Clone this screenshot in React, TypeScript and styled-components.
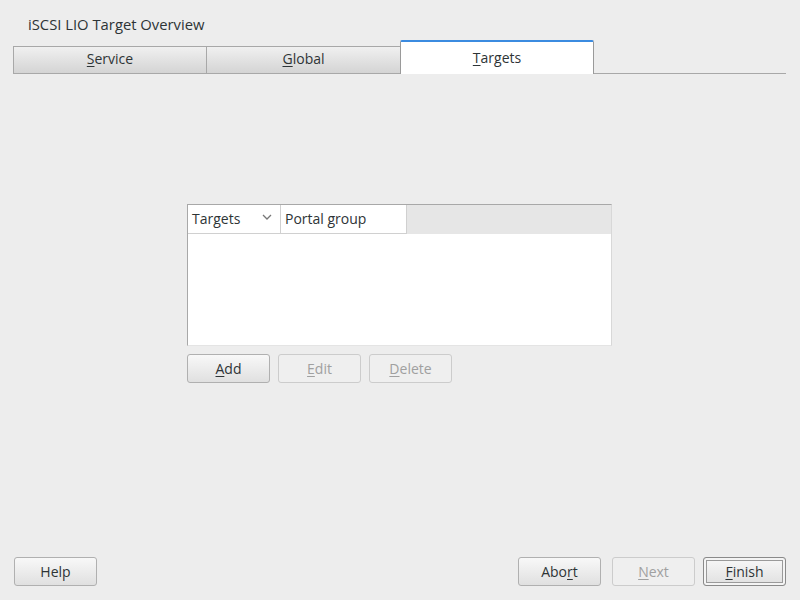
import React from "react";
import styled, { createGlobalStyle, css } from "styled-components";

const GlobalStyle = createGlobalStyle`
  html, body {
    margin: 0;
    padding: 0;
    background: #ededed;
  }
  body {
    font-family: "Open Sans", "DejaVu Sans", sans-serif;
    font-size: 14px;
    color: #2e3436;
  }
`;

const Window = styled.div`
  width: 800px;
  height: 600px;
  display: flex;
  flex-direction: column;
  box-sizing: border-box;
  overflow: hidden;
`;

const Title = styled.div`
  padding: 14px 0 0 28px;
  height: 26px;
  line-height: 20px;
  font-size: 14.8px;
`;

const TabBar = styled.div`
  display: flex;
  align-items: flex-end;
  margin: 0 14px 0 13px;
  height: 34px;
`;

const Tab = styled.div<{ $active?: boolean }>`
  width: 194px;
  height: 28px;
  box-sizing: border-box;
  display: flex;
  align-items: center;
  justify-content: center;
  border: 1px solid #a8a8a8;
  border-right: none;
  background: linear-gradient(#f0f0f0, #d4d4d4);
  line-height: 18px;
  padding-bottom: 2px;
  &:first-child {
    width: 193px;
  }
  ${(p) =>
    p.$active &&
    css`
      height: 34px;
      background: #ffffff;
      border: 1px solid #9a9a9a;
      border-top: 2px solid #3b8be0;
      border-bottom: none;
      border-radius: 2px 2px 0 0;
      padding-bottom: 0;
    `}
`;

const TabRest = styled.div`
  flex: 1;
  height: 1px;
  background: #a8a8a8;
`;

const Key = styled.span`
  text-decoration: underline;
  text-underline-offset: 2px;
`;

const Content = styled.div`
  flex: 1;
  display: flex;
  flex-direction: column;
  align-items: flex-start;
  padding: 130px 0 0 187px;
`;

const Panel = styled.div`
  width: 425px;
  display: flex;
  flex-direction: column;
  gap: 8px;
`;

const Table = styled.div`
  height: 142px;
  box-sizing: border-box;
  border: 1px solid #a8a8a8;
  border-right-color: #d8d8d8;
  border-bottom-color: #e4e4e4;
  background: #ffffff;
  display: flex;
  flex-direction: column;
`;

const HeaderRow = styled.div`
  display: flex;
  height: 29px;
  background: #e6e6e6;
  border-bottom: 1px solid #ffffff;
`;

const HeaderCell = styled.div<{ $w: number }>`
  width: ${(p) => p.$w}px;
  box-sizing: border-box;
  background: #ffffff;
  border-right: 1px solid #d0d0d0;
  border-bottom: 1px solid #d0d0d0;
  display: flex;
  align-items: center;
  justify-content: space-between;
  padding: 0 8px 2px 4px;
`;

const Chevron = styled.svg`
  width: 10px;
  height: 10px;
  margin-bottom: 3px;
`;

const ButtonRow = styled.div`
  display: flex;
  gap: 8px;
`;

const Button = styled.button<{ $disabled?: boolean; $default?: boolean }>`
  width: 83px;
  height: 29px;
  box-sizing: border-box;
  font: inherit;
  color: #2e3436;
  border: 1px solid #b0b0b0;
  border-radius: 3px;
  background: linear-gradient(#f8f8f8, #e0e0e0);
  padding: 0;
  ${(p) =>
    p.$disabled &&
    css`
      color: #a0a0a0;
      background: #efefef;
      border-color: #cccccc;
    `}
  ${(p) =>
    p.$default &&
    css`
      border-color: #8a8a8a;
      box-shadow: inset 0 0 0 2px #f4f4f4, inset 0 0 0 3px #9a9a9a;
    `}
`;

const Footer = styled.div`
  display: flex;
  align-items: center;
  padding: 0 14px 14px 14px;
  gap: 8px;
`;

const Spacer = styled.div`
  flex: 1;
`;

export default function App() {
  return (
    <Window>
      <GlobalStyle />
      <Title>iSCSI LIO Target Overview</Title>
      <TabBar>
        <Tab>
          <span>
            <Key>S</Key>ervice
          </span>
        </Tab>
        <Tab>
          <span>
            <Key>G</Key>lobal
          </span>
        </Tab>
        <Tab $active>
          <span>
            <Key>T</Key>argets
          </span>
        </Tab>
        <TabRest />
      </TabBar>
      <Content>
        <Panel>
          <Table>
            <HeaderRow>
              <HeaderCell $w={93}>
                Targets
                <Chevron viewBox="0 0 10 10">
                  <path d="M1 3 L5 7 L9 3" fill="none" stroke="#777" strokeWidth="1.3" />
                </Chevron>
              </HeaderCell>
              <HeaderCell $w={126}>Portal group</HeaderCell>
            </HeaderRow>
          </Table>
          <ButtonRow>
            <Button>
              <Key>A</Key>dd
            </Button>
            <Button $disabled>
              <Key>E</Key>dit
            </Button>
            <Button $disabled>
              <Key>D</Key>elete
            </Button>
          </ButtonRow>
        </Panel>
      </Content>
      <Footer>
        <Button>Help</Button>
        <Spacer />
        <Button style={{ marginRight: 3 }}>
          Abo<Key>r</Key>t
        </Button>
        <Button $disabled>
          <Key>N</Key>ext
        </Button>
        <Button $default>
          <Key>F</Key>inish
        </Button>
      </Footer>
    </Window>
  );
}
